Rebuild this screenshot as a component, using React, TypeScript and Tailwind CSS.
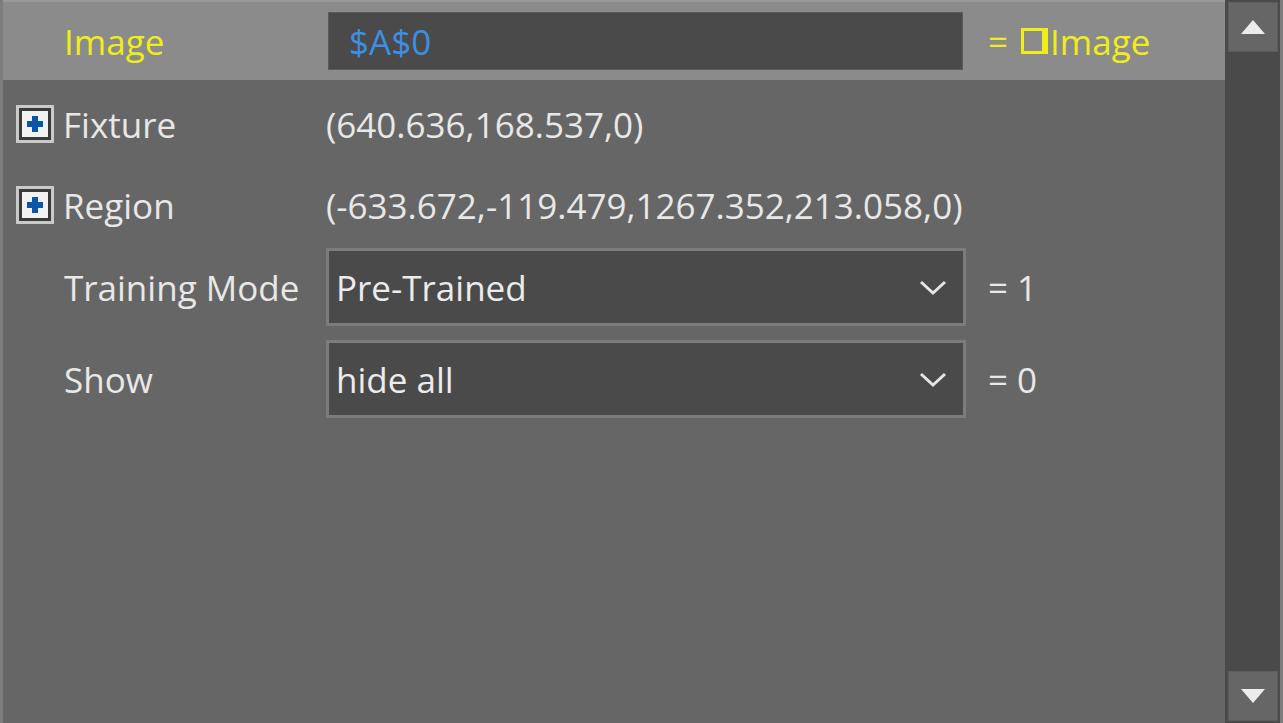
import React from 'react';

const font = { fontFamily: '"Open Sans", "Noto Sans", sans-serif' };

function PlusBox() {
  return (
    <div className="w-[38px] h-[38px] border-[3px] border-[#c9c9c9] bg-[#c9c9c9] flex items-center justify-center shrink-0">
      <div className="w-full h-full border-[3px] border-[#3a3a3a] bg-[#f2f2f2] flex items-center justify-center">
        <svg width="20" height="20" viewBox="0 0 20 20">
          <path d="M10 2v16M2 10h16" stroke="#0a55a8" strokeWidth="6" />
        </svg>
      </div>
    </div>
  );
}

function Chevron() {
  return (
    <svg width="30" height="18" viewBox="0 0 30 18" className="shrink-0">
      <path d="M3 4l12 11 12-11" fill="none" stroke="#e6e6e6" strokeWidth="3" />
    </svg>
  );
}

function Dropdown({ value }: { value: string }) {
  return (
    <div className="w-[640px] h-[78px] border-[3px] border-[#7c7c7c] bg-[#4a4a4a] flex items-center pl-[7px] pr-[15px] shrink-0">
      <span className="flex-1 text-[#ececec]">{value}</span>
      <Chevron />
    </div>
  );
}

export default function App() {
  return (
    <div
      className="w-[1283px] h-[723px] bg-[#666666] flex text-[35px] leading-none text-[#e8e8e8] overflow-hidden"
      style={font}
    >
      {/* left edge */}
      <div className="w-[3px] bg-[#7d7d7d]" />

      <div className="flex-1 flex flex-col">
        {/* header row */}
        <div className="h-[80px] bg-[#8b8b8b] border-t-2 border-[#9a9a9a] flex items-center">
          <div className="w-[325px] pl-[61px] text-[#eeee1a]">Image</div>
          <div className="w-[635px] h-[58px] bg-[#4a4a4a] border border-[#5a5a5a] flex items-center pl-[20px] text-[#3c8fe3]">
            $A$0
          </div>
          <div className="pl-[25px] text-[#eeee1a] flex items-center">
            <span>=</span>
            <span className="inline-block ml-[13px] mr-[2px] w-[27px] h-[26px] border-[3px] border-[#eeee1a] border-r-[6px]" />
            <span>Image</span>
          </div>
        </div>

        {/* property rows */}
        <div className="flex flex-col">
          <div className="h-[84px] flex items-center pt-[4px]">
            <div className="w-[323px] pl-[13px] flex items-center gap-[9px]">
              <PlusBox />
              <span>Fixture</span>
            </div>
            <span>(640.636,168.537,0)</span>
          </div>

          <div className="h-[80px] flex items-center pt-[2px]">
            <div className="w-[323px] pl-[13px] flex items-center gap-[9px]">
              <PlusBox />
              <span>Region</span>
            </div>
            <span>(-633.672,-119.479,1267.352,213.058,0)</span>
          </div>

          <div className="h-[86px] flex items-start pt-[4px]">
            <div className="w-[323px] pl-[61px] h-[78px] flex items-center">Training Mode</div>
            <Dropdown value="Pre-Trained" />
            <span className="pl-[22px] h-[78px] flex items-center">= 1</span>
          </div>

          <div className="flex items-start pt-[10px]">
            <div className="w-[323px] pl-[61px] h-[78px] flex items-center">Show</div>
            <Dropdown value="hide all" />
            <span className="pl-[22px] h-[78px] flex items-center">= 0</span>
          </div>
        </div>
      </div>

      {/* scrollbar */}
      <div className="w-[58px] bg-[#7d7d7d] flex">
        <div className="w-[55px] bg-[#4a4a4a] flex flex-col justify-between pl-[3px] py-[2px]">
          <div className="w-[50px] h-[50px] bg-[#666666] border border-[#5c5c5c] flex items-center justify-center">
            <svg width="24" height="14" viewBox="0 0 24 14">
              <path d="M12 0L24 14H0z" fill="#ececec" />
            </svg>
          </div>
          <div className="w-[50px] h-[50px] bg-[#666666] border border-[#5c5c5c] flex items-center justify-center">
            <svg width="24" height="14" viewBox="0 0 24 14">
              <path d="M0 0H24L12 14z" fill="#ececec" />
            </svg>
          </div>
        </div>
      </div>
    </div>
  );
}
